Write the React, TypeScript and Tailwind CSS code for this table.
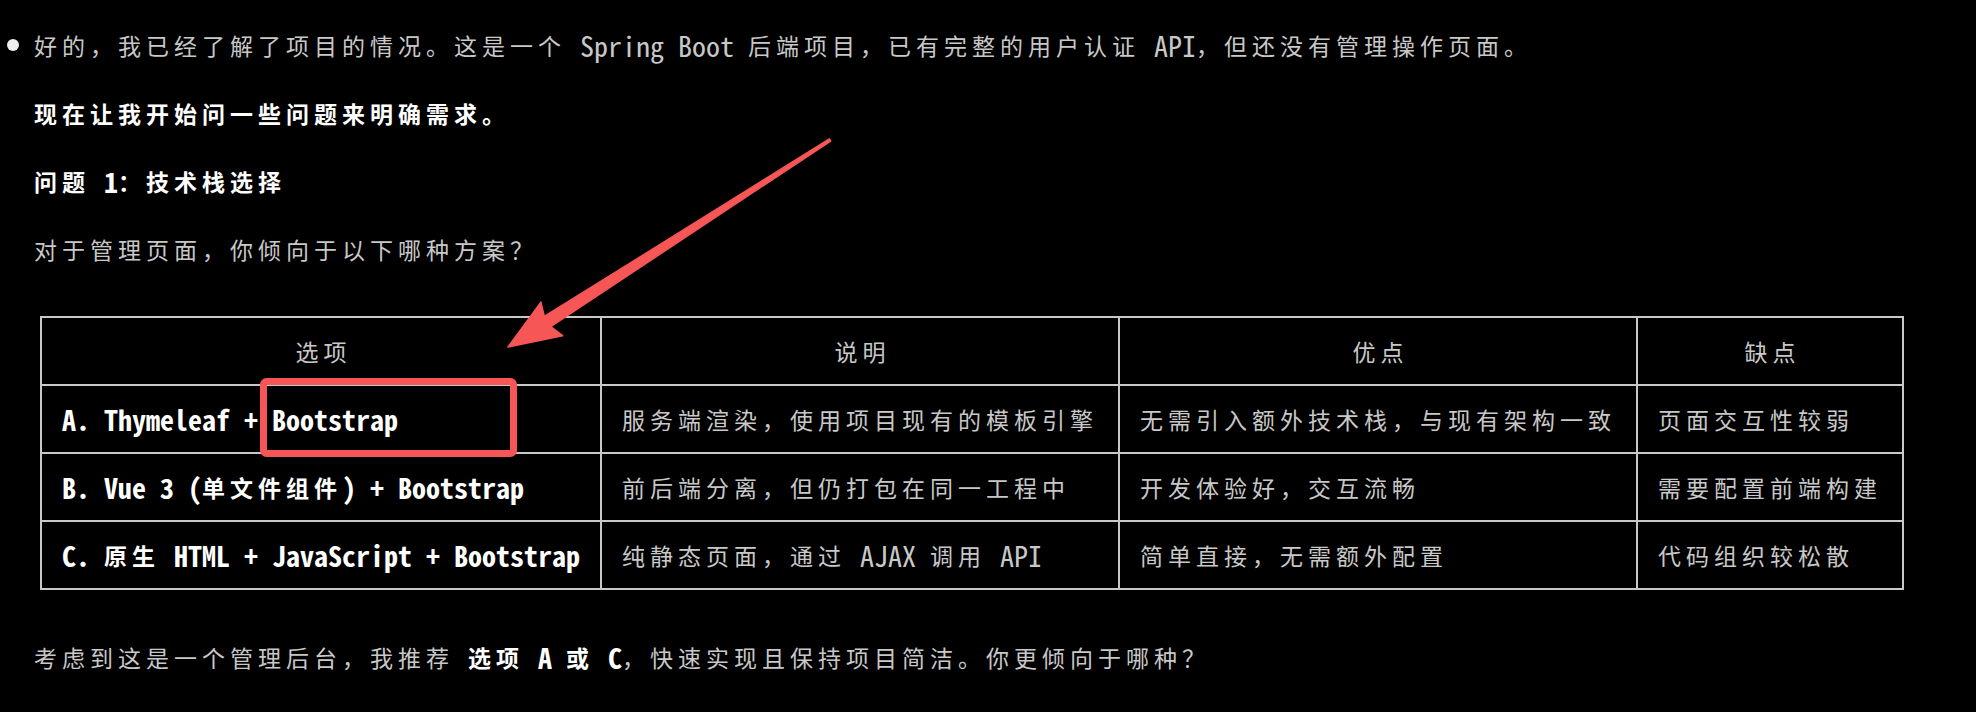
import React from "react";

const CJK_RE = /[\u2e80-\u9fff\uff00-\uffef]/;
const SPLIT_RE = /[\u2e80-\u9fff\uff00-\uffef]+|[^\u2e80-\u9fff\uff00-\uffef]+/g;

function T({ s }: { s: string }) {
  const parts = s.match(SPLIT_RE) || [];
  return (
    <>
      {parts.map((p, i) =>
        CJK_RE.test(p) ? (
          <span
            key={i}
            className="font-['Noto_Sans_CJK_SC','Noto_Sans_Mono_CJK_SC',sans-serif] text-[23px] tracking-[5px] align-[2px]"
          >
            {p}
          </span>
        ) : (
          <span key={i}>{p}</span>
        )
      )}
    </>
  );
}

function Cell({
  text,
  head = false,
  strong = false,
}: {
  text: string;
  head?: boolean;
  strong?: boolean;
}) {
  return (
    <div
      className={
        "flex h-[68px] items-center whitespace-pre border-l-2 border-t-2 border-[#c8c8c8] " +
        (head ? "justify-center pl-[5px] " : "pl-[20px] ") +
        (strong ? "font-bold text-white" : "text-[#c8c8c8]")
      }
    >
      <div>
        <T s={text} />
      </div>
    </div>
  );
}

export default function App() {
  const rows: [string, string, string, string][] = [
    ["A. Thymeleaf + Bootstrap", "服务端渲染，使用项目现有的模板引擎", "无需引入额外技术栈，与现有架构一致", "页面交互性较弱"],
    ["B. Vue 3 (单文件组件) + Bootstrap", "前后端分离，但仍打包在同一工程中", "开发体验好，交互流畅", "需要配置前端构建"],
    ["C. 原生 HTML + JavaScript + Bootstrap", "纯静态页面，通过 AJAX 调用 API", "简单直接，无需额外配置", "代码组织较松散"],
  ];

  return (
    <div className="relative h-[712px] w-[1976px] overflow-hidden bg-black pl-[6px] pt-[28px] font-['Noto_Sans_Mono_CJK_SC','Noto_Sans_CJK_SC',monospace] text-[28px] leading-[34px] text-[#c8c8c8]">
      <div className="flex h-[34px] items-center">
        <div className="flex w-[28px] items-center">
          <div className="ml-[1px] h-[12px] w-[12px] rounded-full bg-[#eeeeee]" />
        </div>
        <div className="whitespace-pre">
          <T s="好的，我已经了解了项目的情况。这是一个 Spring Boot 后端项目，已有完整的用户认证 API，但还没有管理操作页面。" />
        </div>
      </div>
      <div className="h-[34px]" />
      <div className="h-[34px] whitespace-pre pl-[28px] font-bold text-white">
        <T s="现在让我开始问一些问题来明确需求。" />
      </div>
      <div className="h-[34px]" />
      <div className="h-[34px] whitespace-pre pl-[28px] font-bold text-white">
        <T s="问题 1：技术栈选择" />
      </div>
      <div className="h-[34px]" />
      <div className="h-[34px] whitespace-pre pl-[28px]">
        <T s="对于管理页面，你倾向于以下哪种方案？" />
      </div>
      <div className="h-[34px]" />

      <div className="pb-[16px] pl-[34px] pt-[16px]">
        <div className="grid w-max grid-cols-[560px_518px_518px_266px] border-b-2 border-r-2 border-[#c8c8c8]">
          <Cell head text="选项" />
          <Cell head text="说明" />
          <Cell head text="优点" />
          <Cell head text="缺点" />
          {rows.map((r) => (
            <React.Fragment key={r[0]}>
              <Cell strong text={r[0]} />
              <Cell text={r[1]} />
              <Cell text={r[2]} />
              <Cell text={r[3]} />
            </React.Fragment>
          ))}
        </div>
      </div>

      <div className="h-[34px]" />
      <div className="h-[34px] whitespace-pre pl-[28px]">
        <T s="考虑到这是一个管理后台，我推荐 " />
        <span className="font-bold text-white">
          <T s="选项 A 或 C" />
        </span>
        <T s="，快速实现且保持项目简洁。你更倾向于哪种？" />
      </div>

      <svg
        className="pointer-events-none absolute left-0 top-0"
        width="1976"
        height="712"
        viewBox="0 0 1976 712"
      >
        <rect x="263.5" y="381.5" width="250" height="72" rx="3" fill="none" stroke="#f65656" strokeWidth="7" />
        <polygon
          points="508,347 562.6,335.7 550.8,326.6 830.65,141 829.35,139 544.3,316.5 540.9,302.1"
          fill="#f65656"
          stroke="#f65656"
          strokeWidth="1.5"
          strokeLinejoin="round"
        />
      </svg>
    </div>
  );
}
